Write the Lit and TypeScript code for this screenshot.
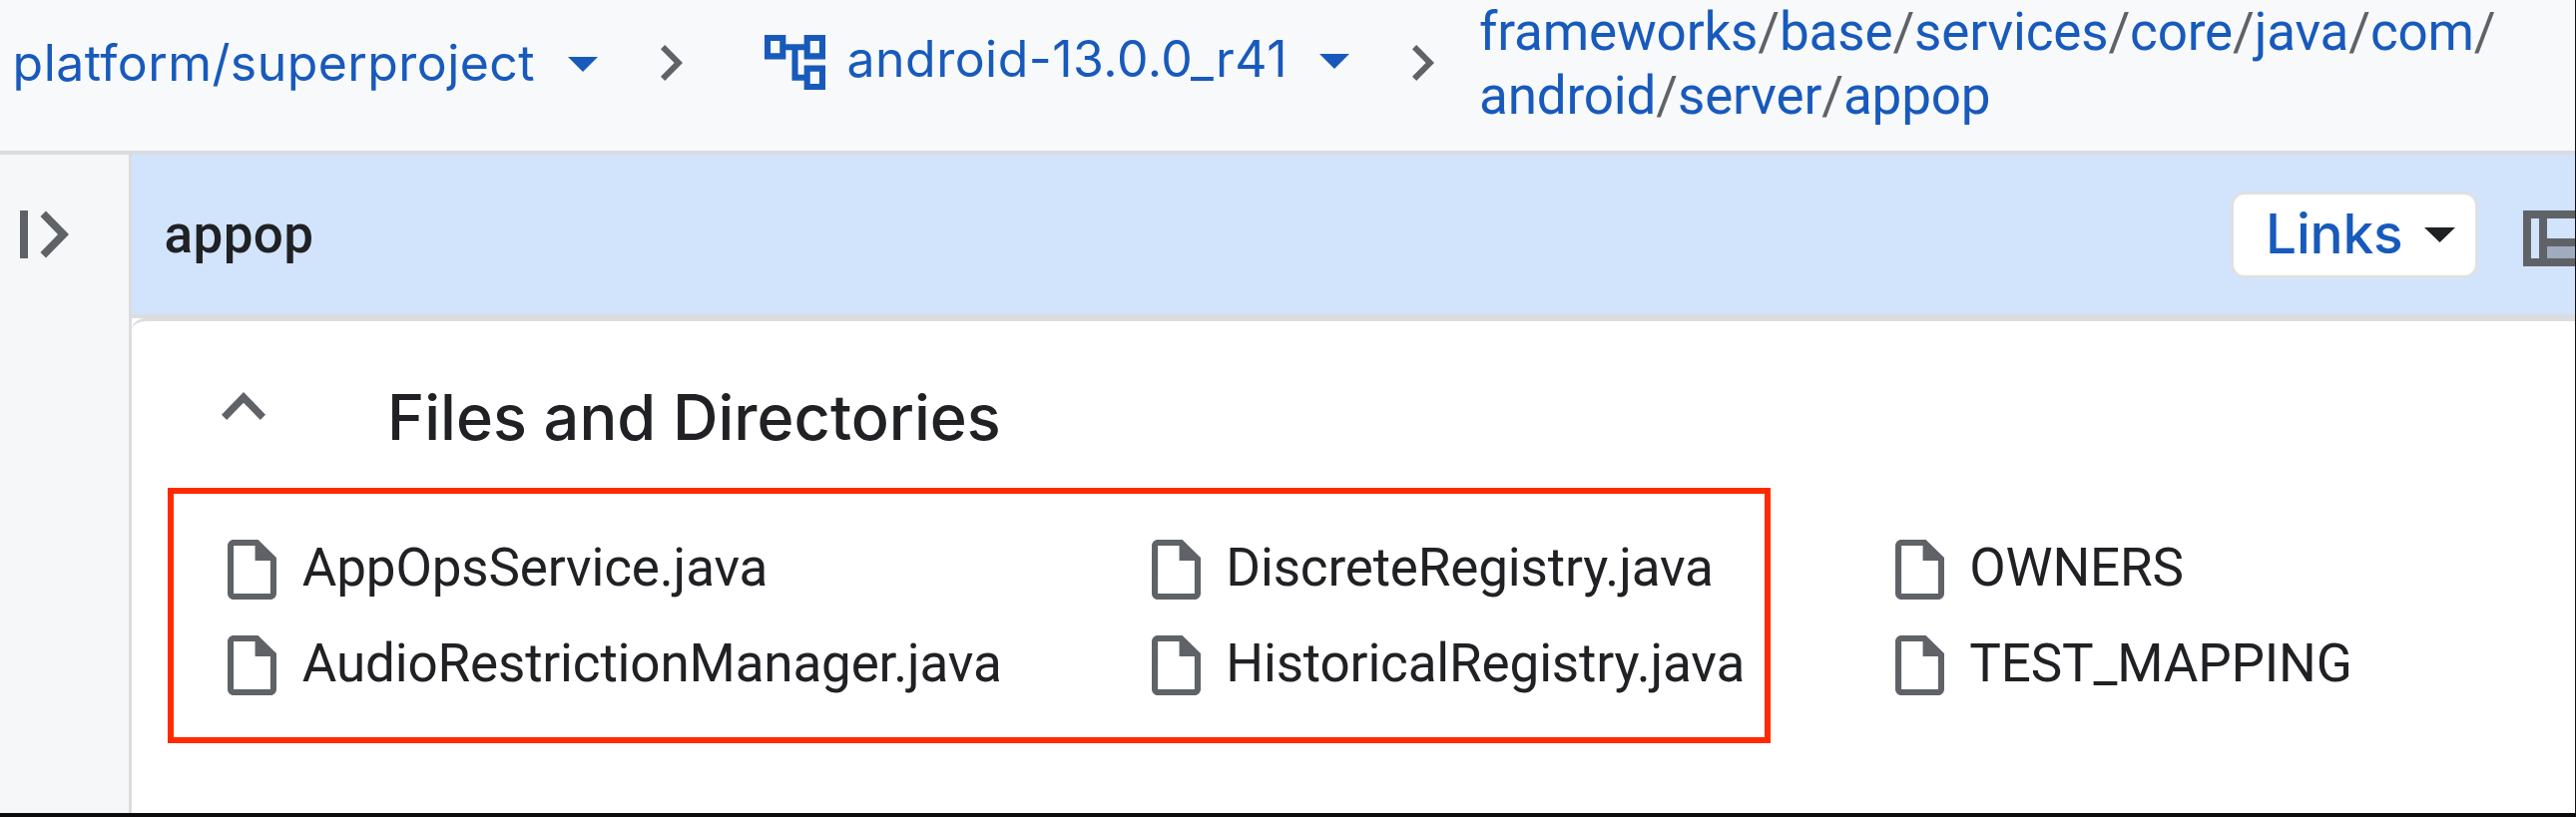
import { LitElement, html, css } from "lit";
import { customElement, property } from "lit/decorators.js";

const FILES = [
  ["AppOpsService.java", "AudioRestrictionManager.java"],
  ["DiscreteRegistry.java", "HistoricalRegistry.java"],
  ["OWNERS", "TEST_MAPPING"],
];

const PATH_LINES = [
  ["frameworks", "/", "base", "/", "services", "/", "core", "/", "java", "/", "com", "/"],
  ["android", "/", "server", "/", "appop"],
];

@customElement("crumb-arrow")
class CrumbArrow extends LitElement {
  static styles = css`
    :host { display: block; width: 30px; height: 15px; flex: none; }
    svg { display: block; width: 100%; height: 100%; fill: currentColor; }
  `;
  render() {
    return html`<svg viewBox="0 0 10 5" preserveAspectRatio="none"><path d="M0 0l5 5 5-5z" /></svg>`;
  }
}

@customElement("crumb-chevron")
class CrumbChevron extends LitElement {
  static styles = css`
    :host { display: block; width: 22px; height: 36px; flex: none; color: #5f6368; }
    svg { display: block; width: 100%; height: 100%; fill: currentColor; }
  `;
  render() {
    return html`<svg viewBox="8.59 6 7.41 12" preserveAspectRatio="none"><path d="M10 6L8.59 7.41 13.17 12l-4.58 4.59L10 18l6-6z" /></svg>`;
  }
}

@customElement("file-entry")
class FileEntry extends LitElement {
  @property() name = "";
  static styles = css`
    :host { display: flex; align-items: center; height: 96px; color: #202124; }
    .icon { width: 49px; height: 60px; margin: 4px 25.8px 0 0; fill: #5f6368; flex: none; }
    .name { font: 400 53px/60px Roboto, sans-serif; letter-spacing: -0.16px; white-space: nowrap; }
  `;
  render() {
    return html`
      <svg class="icon" viewBox="4 2 16 20" preserveAspectRatio="none">
        <path d="M14 2H6c-1.1 0-1.99.9-1.99 2L4 20c0 1.1.89 2 1.99 2H18c1.1 0 2-.9 2-2V8l-6-6zM6 20V4h7v5h5v11H6z" />
      </svg>
      <span class="name">${this.name}</span>
    `;
  }
}

@customElement("app-root")
class AppRoot extends LitElement {
  static styles = css`
    :host {
      display: block;
      box-sizing: border-box;
      width: 2581px;
      height: 819px;
      overflow: hidden;
      background: #fff;
      border-right: 1px solid #111;
      border-bottom: 4px solid #0d0b0c;
      font-family: Roboto, sans-serif;
      color: #202124;
    }
    .header {
      display: flex;
      align-items: flex-start;
      box-sizing: border-box;
      height: 155px;
      background: #f8f9fb;
      border-bottom: 4px solid #dadce0;
      color: #185abc;
      overflow: hidden;
    }
    .crumb {
      display: flex;
      align-items: center;
      height: 60px;
      font: 400 50px/60px Inter, sans-serif;
      white-space: nowrap;
      flex: none;
    }
    .repo { width: 599px; padding-left: 12.6px; margin-top: 33px; box-sizing: border-box; letter-spacing: 0.43px; justify-content: space-between; }
    .repo crumb-arrow { margin-top: 2px; }
    .branch { width: 592px; margin: 29px 0 0 76px; letter-spacing: 0.48px; }
    .branch .tree { width: 61px; height: 55px; fill: #185abc; margin: 7px 21.5px 0 6px; flex: none; }
    .branch span { flex: 1; }
    .branch crumb-arrow { margin-top: 4px; }
    .sep { margin: 45px 0 0 63px; }
    .path {
      font: 400 53px/64px Roboto, sans-serif;
      letter-spacing: -0.17px;
      margin: 0 0 0 45px;
      white-space: nowrap;
    }
    .slash { color: #5f6368; }
    .body { display: grid; grid-template-columns: 132px 1fr; height: 660px; }
    .rail {
      box-sizing: border-box;
      background: #f5f7f9;
      border-right: 3px solid #dadce0;
      padding: 56px 0 0 20px;
    }
    .expand { display: block; width: 49px; height: 48px; fill: #5f6368; }
    .main { min-width: 0; overflow: hidden; }
    .bar {
      display: flex;
      align-items: center;
      box-sizing: border-box;
      height: 164px;
      padding-left: 32.5px;
      background: #d2e3fc;
      border-bottom: 4px solid #dadce0;
    }
    .bar-title { flex: 1; font-weight: 500; font-size: 53px; line-height: 60px; letter-spacing: 0.4px; }
    .links {
      display: flex;
      align-items: center;
      box-sizing: border-box;
      width: 248px;
      height: 87px;
      padding: 0 20px 0 32px;
      justify-content: space-between;
      border: 3px solid #dfe0e2;
      border-radius: 14px;
      background: #fff;
      color: #185abc;
      font: 500 55px/60px Inter, sans-serif;
      letter-spacing: -0.2px;
      margin-right: 45px;
    }
    .links span { padding-bottom: 3px; }
    .links crumb-arrow { color: #202124; width: 31px; }
    .layout { width: 52px; height: 56px; margin-top: 8px; flex: none; display: block; }
    .panel { border-top: 3px solid #dadce0; border-top-left-radius: 14px 12px; }
    .section { display: flex; align-items: center; height: 100px; padding: 46px 0 0 90px; }
    .up { width: 44px; height: 28px; margin: 0 122px 23px 0; fill: #5f6368; flex: none; }
    .section-title { margin: 0; font: 500 63px/76px Inter, sans-serif; white-space: nowrap; }
    .files {
      position: relative;
      display: grid;
      grid-template-columns: 925.5px 745px auto;
      margin-top: 53px;
      padding-left: 96px;
    }
    .marker {
      position: absolute;
      left: 36px;
      top: -32px;
      width: 1606px;
      height: 256px;
      box-sizing: border-box;
      border: 6px solid #ff2a00;
    }
  `;

  render() {
    return html`
      <div class="header">
        <div class="crumb repo"><span>platform/superproject</span><crumb-arrow></crumb-arrow></div>
        <crumb-chevron class="sep"></crumb-chevron>
        <div class="crumb branch">
          <svg class="tree" viewBox="2 3 20 18" preserveAspectRatio="none">
            <path d="M22 11V3h-7v3H9V3H2v8h7V8h2v10h4v3h7v-8h-7v3h-2V8h2v3h7zM7 9H4V5h3v4zm10 6h3v4h-3v-4zm0-10h3v4h-3V5z" />
          </svg>
          <span>android-13.0.0_r41</span>
          <crumb-arrow></crumb-arrow>
        </div>
        <crumb-chevron class="sep"></crumb-chevron>
        <div class="path">
          ${PATH_LINES.map((line) => html`<div>${line.map((p) => (p === "/" ? html`<span class="slash">/</span>` : html`<span>${p}</span>`))}</div>`)}
        </div>
      </div>
      <div class="body">
        <div class="rail">
          <svg class="expand" viewBox="0 0 49 48"><path d="M0 0h8v48H0zM26 0.5L20.5 6 38 24 20.5 42 26 47.5 49 24z" /></svg>
        </div>
        <div class="main">
          <div class="bar">
            <div class="bar-title">appop</div>
            <div class="links"><span>Links</span><crumb-arrow></crumb-arrow></div>
            <svg class="layout" viewBox="0 0 52 56">
              <path fill="#a0abbf" d="M24 36h28v12H24z" />
              <path fill="#5f6368" fill-rule="evenodd" d="M0 0H52V8H24V28H52V36H24V48H52V56H0zM8 8V48H16V8z" />
            </svg>
          </div>
          <div class="panel">
            <div class="section">
              <svg class="up" viewBox="6 8 12 7.41" preserveAspectRatio="none"><path d="M12 8l-6 6 1.41 1.41L12 10.83l4.59 4.58L18 14z" /></svg>
              <h2 class="section-title">Files and Directories</h2>
            </div>
            <div class="files">
              ${FILES.map((col) => html`<div>${col.map((n) => html`<file-entry name=${n}></file-entry>`)}</div>`)}
              <div class="marker"></div>
            </div>
          </div>
        </div>
      </div>
    `;
  }
}
